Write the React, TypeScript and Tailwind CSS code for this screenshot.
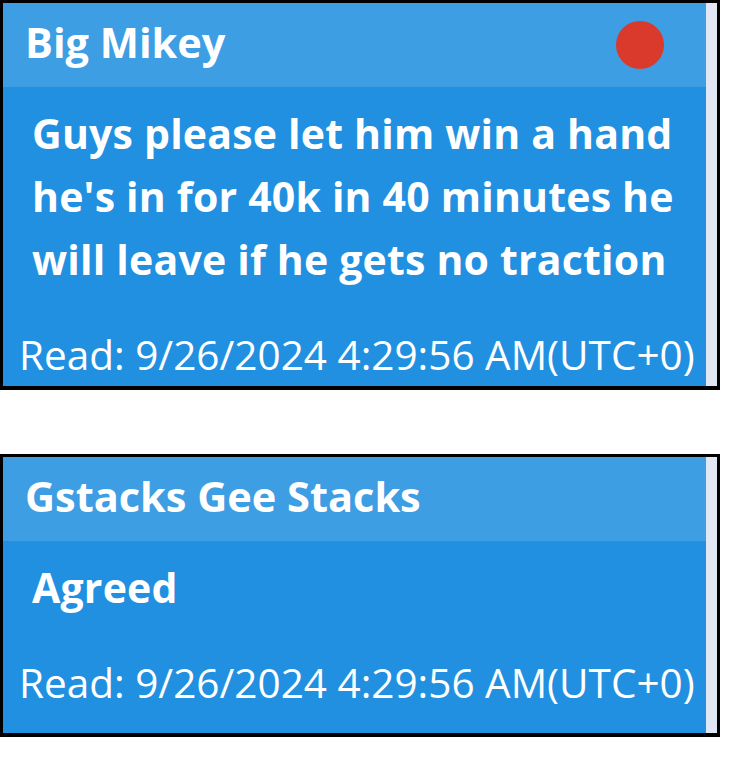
type Message = {
  author: string;
  lines: string[];
  read: string;
  unread?: boolean;
  bottomPad: string;
};

const messages: Message[] = [
  {
    author: "Big Mikey",
    lines: [
      "Guys please let him win a hand",
      "he's in for 40k in 40 minutes he",
      "will leave if he gets no traction",
    ],
    read: "Read: 9/26/2024 4:29:56 AM(UTC+0)",
    unread: true,
    bottomPad: "pb-[7px]",
  },
  {
    author: "Gstacks Gee Stacks",
    lines: ["Agreed"],
    read: "Read: 9/26/2024 4:29:56 AM(UTC+0)",
    bottomPad: "pb-[26px]",
  },
];

function MessageCard({ msg }: { msg: Message }) {
  return (
    <div className="flex w-[720px] border-x-[3px] border-t-[3px] border-b-4 border-black">
      <div className="flex flex-1 flex-col">
        {/* header with sender name */}
        <div className="flex h-[84px] items-center justify-between bg-[#3d9ee3] pl-[22px] pr-[42px]">
          <span className="pb-[5px] text-[41.5px] font-bold text-white">{msg.author}</span>
          {msg.unread && <span className="h-12 w-12 rounded-full bg-[#d93a2b]" />}
        </div>

        {/* message body */}
        <div className={`flex flex-col bg-[#2190e0] pt-[15px] ${msg.bottomPad}`}>
          <div className="pl-[29px] text-[41px] font-bold leading-[63px] tracking-[0.2px] text-white">
            {msg.lines.map((l) => (
              <div key={l}>{l}</div>
            ))}
          </div>
          <div className="mt-[40px] pl-[16px] text-[40.5px] leading-[48px] text-white">
            {msg.read}
          </div>
        </div>
      </div>
      {/* scrollbar gutter */}
      <div className="w-[11px] bg-[#e2e7f6]" />
    </div>
  );
}

export default function App() {
  return (
    <div
      className="flex h-[766px] w-[742px] flex-col gap-[64px] bg-white"
      style={{ fontFamily: '"Open Sans", sans-serif' }}
    >
      {messages.map((m) => (
        <MessageCard key={m.author} msg={m} />
      ))}
    </div>
  );
}
